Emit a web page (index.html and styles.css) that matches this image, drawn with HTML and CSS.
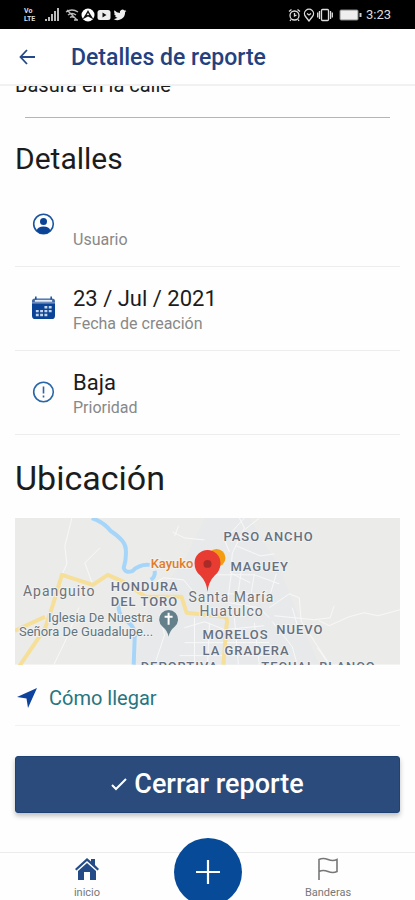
FILE: index.html
```html
<!DOCTYPE html>
<html lang="es">
<head>
    <meta charset="UTF-8">
    <meta name="viewport" content="width=device-width, initial-scale=1.0">
    <title>Detalles de reporte</title>
    <link rel="stylesheet" href="styles.css">
</head>
<body>
    <div class="status-bar">
        <div class="status-icons">
            <span class="volte"><span>Vo</span><span>LTE</span></span>
            <svg class="signal" width="14" height="14" viewBox="0 0 14 14" fill="#bbb">
                <path d="M0 11h2v2H0zM3 9h2v4H3zM6 6h2v7H6zM9 3h2v10H9zM12 0h2v13h-2z"/>
            </svg>
            <svg width="14" height="14" viewBox="0 0 14 14" fill="none" stroke="#bbb" stroke-width="1.4">
                <path d="M1 4q6-4 12 0M3 7q4-3 8 0M5 9.500q2-1.500 4 0M2 2l10 10M9 12h4"/>
            </svg>
            <svg width="14" height="14" viewBox="0 0 14 14">
                <circle cx="7" cy="7" r="6.500" fill="#fff"/>
                <path d="M3.500 9.500Q5 7 7 3.500q2 3.500 3.500 6L7 7.500z" fill="none" stroke="#111" stroke-width="1.500"/>
            </svg>
            <svg width="14" height="14" viewBox="0 0 14 14">
                <rect x="0.500" y="2" width="13" height="10" rx="2.500" fill="#eee"/>
                <path d="M5.500 4.500v5L9.500 7z" fill="#111"/>
            </svg>
            <svg width="14" height="14" viewBox="0 0 24 24" fill="#eee">
                <path d="M23 5a9 9 0 0 1-2.600.700 4.500 4.500 0 0 0 2-2.500 9 9 0 0 1-2.900 1.100 4.500 4.500 0 0 0-7.700 4.100A12.800 12.800 0 0 1 2.500 3.700a4.500 4.500 0 0 0 1.400 6 4.500 4.500 0 0 1-2-.600 4.500 4.500 0 0 0 3.600 4.500 4.500 4.500 0 0 1-2 .1 4.500 4.500 0 0 0 4.200 3.100A9 9 0 0 1 1 18.700 12.800 12.800 0 0 0 20.700 7.300 9 9 0 0 0 23 5z"/>
            </svg>
        </div>
        <div class="status-icons">
            <svg width="13" height="14" viewBox="0 0 13 14" fill="none" stroke="#ddd" stroke-width="1.300">
                <circle cx="6.500" cy="7.500" r="4.500"/>
                <path d="M6.500 5v3l2-1M1 3.500L3.500 1.500M12 3.500L9.500 1.500M3 11.500l-1 1.500M10 11.500l1 1.500"/>
            </svg>
            <svg width="12" height="14" viewBox="0 0 12 14" fill="none" stroke="#ddd" stroke-width="1.300">
                <path d="M6 13L2.500 8.500a4.500 4.500 0 1 1 7 0z"/>
                <path d="M4 5.500l2 1.500 2-1.500"/>
            </svg>
            <svg width="16" height="14" viewBox="0 0 16 14" fill="none" stroke="#ddd" stroke-width="1.300">
                <rect x="4.500" y="1.500" width="7" height="11" rx="1"/>
                <path d="M2.500 3v8M13.500 3v8M.700 4.500v5M15.300 4.500v5"/>
            </svg>
            <svg class="battery" width="23" height="14" viewBox="0 0 23 14">
                <rect x="1" y="2" width="18" height="10" rx="1" fill="#eee" stroke="#888"/>
                <path d="M21.500 5v4" stroke="#ccc" stroke-width="2"/>
            </svg>
            <span class="clock">3:23</span>
        </div>
    </div>

    <header class="toolbar">
        <a href="#" class="back" aria-label="Volver">
            <svg width="16" height="16" viewBox="0 0 16 16" fill="none" stroke="#23498a" stroke-width="1.800">
                <path d="M8 1L1.500 8 8 15M1.500 8H16"/>
            </svg>
        </a>
        <h1>Detalles de reporte</h1>
    </header>

    <main class="content">
        <p class="report-title">Basura en la calle</p>

        <h2 class="section-title">Detalles</h2>
        <ul class="details">
            <li class="detail">
                <svg class="detail-icon" width="22" height="22" viewBox="0 0 22 22">
                    <circle cx="11" cy="11" r="9.800" fill="none" stroke="#1c559f" stroke-width="1.600"/>
                    <circle cx="11" cy="8.500" r="3.500" fill="#0b4496"/>
                    <path d="M4 17.500q1.500-4 7-4t7 4q-3 3.500-7 3.500t-7-3.500z" fill="#0b4496"/>
                </svg>
                <div class="detail-text">
                    <span class="value"></span>
                    <span class="label">Usuario</span>
                </div>
            </li>
            <li class="detail">
                <svg class="detail-icon" width="24" height="24" viewBox="0 0 24 24">
                    <path d="M0 5q0-3 3-3h18q3 0 3 3v1.500H0z" fill="#3d69a8"/>
                    <path d="M3 4.500h18" stroke="#e4edf8" stroke-width="2"/>
                    <path d="M4 0v3M20 0v3" stroke="#0b4496" stroke-width="1.500"/>
                    <path d="M0 7h24v13q0 3.500-3.500 3.500h-17Q0 23.500 0 20z" fill="#0b4496"/>
                    <path d="M13 10h3v2.500h-3zM17.500 10h3v2.500h-3zM4 14h3v2.500H4zM8.500 14h3v2.500h-3zM13 14h3v2.500h-3zM17.500 14h3v2.500h-3zM4 18h3v2.500H4zM8.500 18h3v2.500h-3zM13 18h3v2.500h-3z" fill="#c5d6ec"/>
                </svg>
                <div class="detail-text">
                    <span class="value">23 / Jul / 2021</span>
                    <span class="label">Fecha de creación</span>
                </div>
            </li>
            <li class="detail">
                <svg class="detail-icon" width="22" height="22" viewBox="0 0 22 22" fill="none" stroke="#2a67a9" stroke-width="1.600">
                    <circle cx="11" cy="11" r="9.800"/>
                    <path d="M11 5.500v7M11 14.500v2"/>
                </svg>
                <div class="detail-text">
                    <span class="value">Baja</span>
                    <span class="label">Prioridad</span>
                </div>
            </li>
        </ul>

        <h2 class="section-title location-title">Ubicación</h2>
        <svg class="map" viewBox="0 0 386 147" role="img" aria-label="Mapa de Santa María Huatulco">
            <rect width="386" height="147" fill="#ebebe9"/>
            <path d="M190 0h45l30 50 20 50 20 47H120l15-60 35-45z" fill="#e7e9eb"/>
            <g class="streets">
                <path d="M57 0L50 28l2 18-5 11M78 67l-8-22 15-15M64 90l-12 30-13 27M158 14l12 6 20 2M160 18l4-10M134 68l15-8 20 2 10 12M140 147l10-30-5-20M225 0l5 10-12 25-2 20 20 10M230 0l-20 22 5 12M245 0l-15 12M222 28l24 10 14-2M200 57h40l25 9M217 55l-4 30M228 45l-5 35M240 56l-5 30M213 76h43l6-20M215 85l30 5 10 10M255 90l20-14 10 4 2 24 28 42M258 104l20 25 5 18M278 90l8 28M260 98l40 4 16-2 4-12M305 103l10 5 20-9 15-4 14 3 22-6M303 130l12 17M170 110l20-6 20 8 40-4M180 100v47M195 105l-2 42M220 100l4 47M240 105l5 42M170 125h85M165 138h90"/>
            </g>
            <g class="river">
                <path d="M77 0q12 4 19 13 15 10 15 18 1 9-2 19 2 6 9 3 7-7 17-6M140 53q1 6-4 9M104 85q-1 9 4 15 14 9 12 20l-1 27"/>
            </g>
            <g class="road">
                <path d="M4 149l26-38 8-24 9-30 31 10 15-10 16 7 22 15h36l5 16 37 4q5 1 3 9l-3 39M0 113l30-14"/>
            </g>
            <g class="district">
                <text x="209" y="23">PASO ANCHO</text>
                <text x="216" y="53">MAGUEY</text>
                <text x="96" y="73">HONDURA</text>
                <text x="96" y="88">DEL TORO</text>
                <text x="262" y="116">NUEVO</text>
                <text x="188" y="121">MORELOS</text>
                <text x="188" y="137">LA GRADERA</text>
                <text x="126" y="153">DEPORTIVA</text>
                <text x="247" y="153">TECUAL BLANCO</text>
            </g>
            <g class="town">
                <text x="8" y="78">Apanguito</text>
                <text x="174" y="84">Santa María</text>
                <text x="185" y="98">Huatulco</text>
            </g>
            <g class="place">
                <text x="33" y="104">Iglesia De Nuestra</text>
                <text x="4" y="118">Señora De Guadalupe...</text>
            </g>
            <text class="shop" x="136" y="50">Kayuko</text>
            <path d="M154 119q-1-6-6-10a9.500 9.500 0 1 1 12 0q-5 4-6 10z" fill="#64808b"/>
            <path d="M154 95v12M150 99h8" stroke="#fff" stroke-width="2"/>
            <circle cx="202" cy="40" r="9" fill="#f39c12"/>
            <path d="M193 74q-1-10-7-16-6-5-6-13a13 13 0 0 1 26 0q0 8-6 13-6 6-7 16z" fill="#e83b32"/>
            <circle cx="193" cy="46" r="4" fill="#a92b27"/>
        </svg>

        <a href="#" class="directions">
            <svg width="20" height="20" viewBox="0 0 20 20" fill="#0d439c">
                <path d="M20 0L11 20 9.500 10.500 0 9z"/>
            </svg>
            Cómo llegar
        </a>

        <button type="button" class="close-btn">
            <svg width="16" height="14" viewBox="0 0 16 14" fill="none" stroke="#fff" stroke-width="2">
                <path d="M1 8l4 4L15 2"/>
            </svg>
            Cerrar reporte
        </button>
    </main>

    <nav class="tab-bar">
        <a href="#" class="tab">
            <svg width="24" height="24" viewBox="0 0 24 24" fill="#234b88">
                <path d="M12 1l4 3.500V2h4v6l4 4-1.500 1.500L12 4 1.500 13.500 0 12z"/>
                <path d="M12 6l9 8v9h-6v-8H9v8H3v-9z"/>
            </svg>
            <span>inicio</span>
        </a>
        <button type="button" class="add-btn" aria-label="Nuevo reporte">
            <svg width="24" height="24" viewBox="0 0 24 24" fill="none" stroke="#fff" stroke-width="2.200">
                <path d="M12 0v24M0 12h24"/>
            </svg>
        </button>
        <a href="#" class="tab">
            <svg width="24" height="24" viewBox="0 0 24 24" fill="none" stroke="#777" stroke-width="1.600">
                <path d="M3 23V2.500q4-2 9 0t9 0v12q-4 2-9 0t-9 0"/>
            </svg>
            <span>Banderas</span>
        </a>
    </nav>
</body>
</html>
```

FILE: styles.css
```css
* {
    margin: 0;
    padding: 0;
    box-sizing: border-box;
}

body {
    font-family: Roboto, "Liberation Sans", sans-serif;
    background: #fefefe;
    color: #1c1c1c;
    height: 100vh;
    display: flex;
    flex-direction: column;
    overflow: hidden;
}

a {
    text-decoration: none;
}

svg {
    display: block;
    flex-shrink: 0;
}

/* Barra de estado */
.status-bar {
    background: #000;
    color: #ddd;
    height: 29px;
    flex-shrink: 0;
    display: flex;
    align-items: center;
    justify-content: space-between;
    padding: 0 24px;
}

.status-icons {
    display: flex;
    align-items: center;
    gap: 2px;
}

.volte {
    display: flex;
    flex-direction: column;
    font-size: 7px;
    font-weight: 700;
    line-height: 8px;
}

.signal {
    margin: 0 4px 0 8px;
}

.battery {
    margin-left: 4px;
}

.clock {
    font-size: 13px;
    margin-left: 2px;
}

/* Encabezado */
.toolbar {
    height: 57px;
    flex-shrink: 0;
    display: flex;
    align-items: center;
    gap: 36px;
    padding: 1px 19px 0;
    background: #fff;
    border-bottom: 2px solid #f1f1f1;
}

.toolbar h1 {
    font-size: 23px;
    font-weight: 500;
    color: #23417f;
}

/* Contenido */
.content {
    flex: 1;
    min-height: 0;
    overflow: hidden;
    padding: 0 15px;
}

.report-title {
    font-size: 20px;
    line-height: 24px;
    margin: -13px 10px 0;
    padding-bottom: 20px;
    border-bottom: 1px solid #b5b5b5;
    text-indent: -10px;
}

.section-title {
    font-size: 30px;
    font-weight: 400;
    line-height: 40px;
    margin-top: 21px;
}

.location-title {
    font-size: 34px;
    margin-top: 23px;
}

.details {
    list-style: none;
    margin-top: 4px;
}

.detail {
    display: flex;
    align-items: center;
    height: 84px;
    padding: 3px 0 0 17px;
    border-bottom: 1px solid #ededed;
}

.detail-icon {
    width: 23px;
    margin-bottom: 5px;
}

.detail-text {
    display: flex;
    flex-direction: column;
    margin-left: 18px;
}

.value {
    font-size: 22px;
    line-height: 28px;
    min-height: 28px;
}

.label {
    font-size: 16px;
    line-height: 22px;
    color: #888;
}

/* Mapa */
.map {
    width: 100%;
    height: auto;
    margin-top: 20px;
    font-size: 13px;
}

.streets,
.river,
.road {
    fill: none;
    stroke-linejoin: round;
}

.streets {
    stroke: #f8f8f8;
    stroke-width: 1;
}

.river {
    stroke: #a6d5fa;
    stroke-width: 4;
}

.road {
    stroke: #f6df98;
    stroke-width: 4;
}

.map text {
    stroke: #f1f1f0;
    stroke-width: 2;
    paint-order: stroke;
}

.district {
    font-weight: 500;
    letter-spacing: 1px;
    fill: #667080;
}

.town {
    font-size: 14px;
    letter-spacing: 1px;
    fill: #6d7378;
}

.place {
    fill: #607580;
}

.shop {
    font-weight: 500;
    fill: #df7c2a;
}

.directions {
    display: flex;
    align-items: center;
    gap: 12px;
    height: 61px;
    padding: 6px 2px 0;
    border-bottom: 1px solid #f2f2f2;
    font-size: 20px;
    color: #27757f;
}

.close-btn {
    width: 100%;
    height: 57px;
    margin-top: 30px;
    display: flex;
    align-items: center;
    justify-content: center;
    gap: 7px;
    background: #2a4b7c;
    color: #fff;
    border: 1px solid #1f4275;
    border-radius: 3px;
    box-shadow: 0 3px 5px rgba(0, 0, 0, 0.25);
    font-family: inherit;
    font-size: 27px;
    font-weight: 500;
    cursor: pointer;
}

/* Barra inferior */
.tab-bar {
    position: relative;
    height: 48px;
    flex-shrink: 0;
    display: flex;
    justify-content: space-between;
    padding: 0 50px;
    border-top: 1px solid #ececec;
}

.tab {
    width: 74px;
    display: flex;
    flex-direction: column;
    align-items: center;
    gap: 5px;
    padding-top: 4px;
    font-size: 11px;
    color: #777;
}

.add-btn {
    position: absolute;
    top: -15px;
    left: 50%;
    width: 68px;
    height: 68px;
    margin-left: -34px;
    display: flex;
    align-items: center;
    justify-content: center;
    background: #064a98;
    border: none;
    border-radius: 50%;
    cursor: pointer;
}
```
